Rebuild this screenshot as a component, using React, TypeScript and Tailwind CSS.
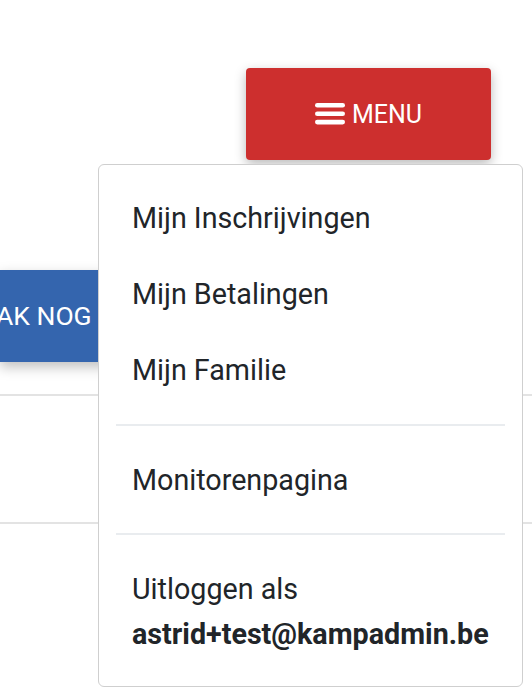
import React from "react";

function Bars() {
  return (
    <svg width="30" height="22" viewBox="0 0 30 22" className="block">
      <rect x="0" y="0" width="30" height="4.6" rx="2.3" fill="white" />
      <rect x="0" y="8.4" width="30" height="4.6" rx="2.3" fill="white" />
      <rect x="0" y="16.8" width="30" height="4.6" rx="2.3" fill="white" />
    </svg>
  );
}

export default function App() {
  const items1 = ["Mijn Inschrijvingen", "Mijn Betalingen", "Mijn Familie"];
  return (
    <div
      className="relative w-[532px] h-[698px] overflow-hidden bg-white text-[#212529]"
      style={{ fontFamily: "Roboto, 'Noto Sans', sans-serif" }}
    >
      {/* header */}
      <div className="flex justify-end pt-[68px] pr-[41px]">
        <button className="flex h-[92px] w-[245px] items-center justify-center gap-[7px] rounded-[4px] bg-[#cd2f2e] text-[25px] uppercase leading-none text-white shadow-[0_4px_12px_rgba(0,0,0,0.28)]">
          <Bars />
          <span className="pt-[1px]">Menu</span>
        </button>
      </div>

      {/* page content behind */}
      <div className="mt-[110px]">
        <div className="flex h-[92px] w-[300px] items-center bg-[#3465ae] text-[26.5px] uppercase leading-none text-white shadow-[0_5px_12px_rgba(0,0,0,0.25)]">
          <span className="-ml-[4px]">AK NOG</span>
        </div>
        <div className="mt-[32px] border-b-[2px] border-[#e3e3e3]"></div>
        <div className="h-[128px] border-b-[2px] border-[#e3e3e3]"></div>
      </div>

      {/* dropdown menu */}
      <div className="absolute left-[98px] top-[164px] w-[425px] rounded-[6px] border-[1.5px] border-[#cfcfcf] bg-white pt-[15px] pb-[14px] text-[28.7px] leading-[45px]">
        {items1.map((t) => (
          <div key={t} className="px-[33px] py-[15.5px]">
            {t}
          </div>
        ))}
        <div className="mx-[17px] my-[16px] h-[2px] bg-[#e9ecef]"></div>
        <div className="px-[33px] py-[15.5px]">Monitorenpagina</div>
        <div className="mx-[17px] mt-[15px] mb-[16px] h-[2px] bg-[#e9ecef]"></div>
        <div className="px-[33px] py-[15.5px]">
          <div>Uitloggen als</div>
          <div className="font-bold">astrid+test@kampadmin.be</div>
        </div>
      </div>
    </div>
  );
}
